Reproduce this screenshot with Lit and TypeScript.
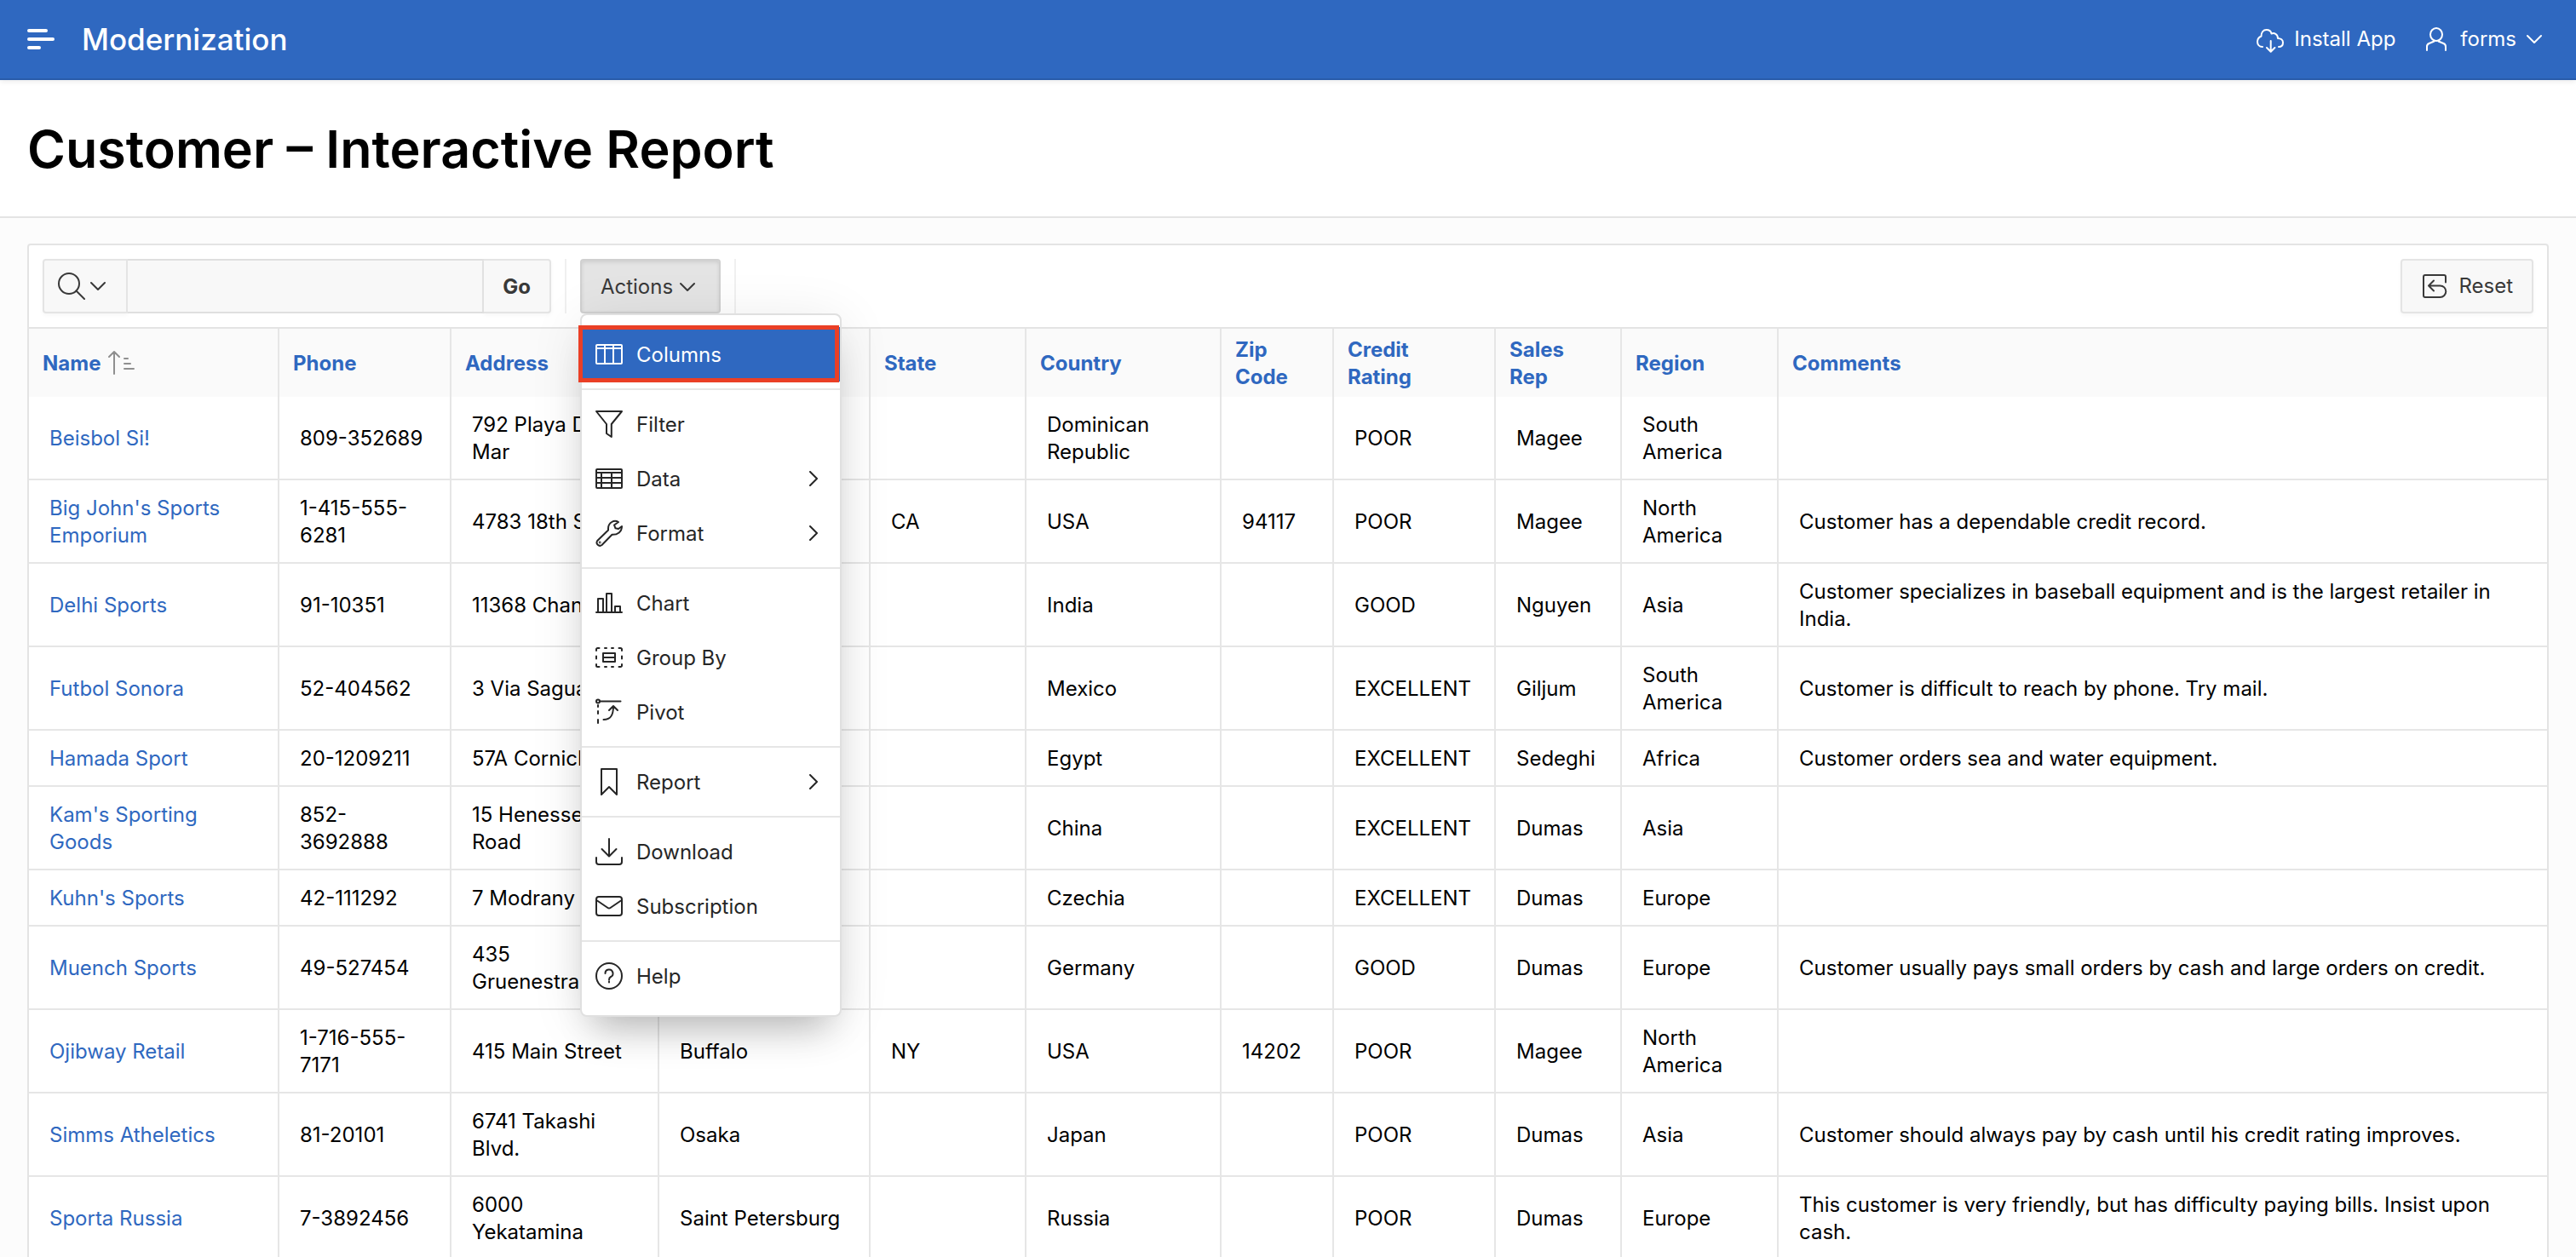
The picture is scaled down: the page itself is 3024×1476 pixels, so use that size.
import { LitElement, html, css, svg, nothing, type TemplateResult } from "lit";
import { customElement, property, state } from "lit/decorators.js";

const ICONS: Record<string, TemplateResult> = {
  install: svg`<path d="M7 25C3 25 1 22 1 19S3 13.500 5.500 12.500C5.500 8 8 5 11.500 5S17 7 17.500 9.500C21 8 25 10.500 25 15C28.500 15 31 17 31 20S29 25 26 25M16.700 18v12.500M12 26l4.700 4.700 4.700-4.700"/>`,
  user: svg`<ellipse cx="16" cy="10.500" rx="7" ry="7.500"/><path d="M13.500 17.500v1L7.500 21a4 4 0 0 0-2.500 4v4M18.500 17.500v1l6 2.500a4 4 0 0 1 2.500 4v4"/>`,
  reset: svg`<path d="M29 11.500V5a2 2 0 0 0-2-2H5a2 2 0 0 0-2 2v22a2 2 0 0 0 2 2h17.500a6.800 6.800 0 0 0 0-13.600H9M15 9.500l-6 6 6 6"/>`,
  search: svg`<circle cx="13" cy="13" r="12"/><path d="M21.500 21.500L31 31"/>`,
  columns: svg`<rect x="1" y="5" width="30" height="22" rx="1"/><path d="M1 9h30M11 5v22M21 5v22"/>`,
  filter: svg`<path d="M1 1h30L18.800 16v15L13 27V16Z"/>`,
  data: svg`<rect x="1" y="5" width="30" height="22" rx="1"/><path d="M1 9h30M1 15h30M1 21h30M7 9v18M19 9v18"/>`,
  format: svg`<path d="M27 3C22 0 15 3.500 15 10.500V12.500L2.200 25A3.700 3.700 0 0 0 7.500 30L19.500 17.800C26 18 31 14.500 31 8L27 11 23.500 10.300 22 6.500Z"/><circle cx="5.200" cy="27" r=".4"/>`,
  chart: svg`<path d="M1 27h30M3 27V11h6v16M13 27V5h6v22M23 27v-7h6v7"/>`,
  group: svg`<rect x="9" y="11" width="14" height="10"/><path d="M9 16h14M1 8V6.500A1.500 1.500 0 0 1 2.500 5H4.500M27.500 5h2A1.500 1.500 0 0 1 31 6.500V8M31 24v1.500a1.500 1.500 0 0 1-1.500 1.500h-2M4.500 27H2.500A1.500 1.500 0 0 1 1 25.500V24M11 5h2M19 5h2M11 27h2M19 27h2M1 14.500v3M31 14.500v3"/>`,
  pivot: svg`<circle cx="3" cy="3.500" r="2"/><path d="M5 3.500h24.500M3 8v2M3 15v3M3 25v4M9.500 25c9 0 11.500-6 11.500-15.500M16 14l5-5 5 5"/>`,
  report: svg`<path d="M7 1h18v30l-9-9-9 9Z"/>`,
  download: svg`<path d="M16 1v20M7.500 13l8.500 8.500 8.500-8.500M1 23v5a3 3 0 0 0 3 3h24a3 3 0 0 0 3-3v-5"/>`,
  mail: svg`<rect x="1" y="5" width="30" height="22" rx="3"/><path d="M2 9.500l12.500 8.500a2.500 2.500 0 0 0 3 0L30 9.500"/>`,
  help: svg`<circle cx="16" cy="16" r="15"/><path d="M11.500 13a4.500 4.500 0 1 1 6.500 4c-1.500.800-2 1.500-2 3.500M16 22.500v1"/>`,
};

const CHEVRON_DOWN = html`<svg class="chevron-down" viewBox="0 0 18 12" aria-hidden="true"><path d="M1 2l8 8 8-8" /></svg>`;
const CHEVRON_RIGHT = html`<svg class="chevron-right" viewBox="0 0 12 18" aria-hidden="true"><path d="M2 1l8 8-8 8" /></svg>`;

const icon = (name: string) =>
  html`<svg class="icon" viewBox="0 0 32 32" aria-hidden="true">${ICONS[name]}</svg>`;

const iconStyles = css`
  svg {
    flex: none;
    fill: none;
    stroke: currentColor;
    stroke-width: 2;
    stroke-linecap: round;
    stroke-linejoin: round;
  }
  .icon {
    width: 32px;
    height: 32px;
  }
  .chevron-down {
    width: 18px;
    height: 12px;
  }
  .chevron-right {
    width: 12px;
    height: 18px;
  }
`;

interface MenuEntry {
  label: string;
  icon: string;
  submenu?: boolean;
  active?: boolean;
}

const MENU: MenuEntry[][] = [
  [{ label: "Columns", icon: "columns", active: true }],
  [
    { label: "Filter", icon: "filter" },
    { label: "Data", icon: "data", submenu: true },
    { label: "Format", icon: "format", submenu: true },
  ],
  [
    { label: "Chart", icon: "chart" },
    { label: "Group By", icon: "group" },
    { label: "Pivot", icon: "pivot" },
  ],
  [{ label: "Report", icon: "report", submenu: true }],
  [
    { label: "Download", icon: "download" },
    { label: "Subscription", icon: "mail" },
  ],
  [{ label: "Help", icon: "help" }],
];

const COLUMNS = [
  { label: "Name", cls: "name" },
  { label: "Phone", cls: "phone" },
  { label: "Address", cls: "address" },
  { label: "City", cls: "city" },
  { label: "State", cls: "state" },
  { label: "Country", cls: "country" },
  { label: "Zip Code", cls: "zip" },
  { label: "Credit Rating", cls: "rating" },
  { label: "Sales Rep", cls: "rep" },
  { label: "Region", cls: "region" },
  { label: "Comments", cls: "comments" },
];

const CUSTOMERS: string[][] = [
  ["Beisbol Si!", "809-352689", "792 Playa Del Mar", "San Pedro de Macoris", "", "Dominican Republic", "", "POOR", "Magee", "South America", ""],
  ["Big John's Sports Emporium", "1-415-555-6281", "4783 18th Street", "San Francisco", "CA", "USA", "94117", "POOR", "Magee", "North America", "Customer has a dependable credit record."],
  ["Delhi Sports", "91-10351", "11368 Chanakya", "New Delhi", "", "India", "", "GOOD", "Nguyen", "Asia", "Customer specializes in baseball equipment and is the largest retailer in India."],
  ["Futbol Sonora", "52-404562", "3 Via Saguaro", "Nogales", "", "Mexico", "", "EXCELLENT", "Giljum", "South America", "Customer is difficult to reach by phone. Try mail."],
  ["Hamada Sport", "20-1209211", "57A Corniche", "Alexandria", "", "Egypt", "", "EXCELLENT", "Sedeghi", "Africa", "Customer orders sea and water equipment."],
  ["Kam's Sporting Goods", "852-3692888", "15 Henessey Road", "Hong Kong", "", "China", "", "EXCELLENT", "Dumas", "Asia", ""],
  ["Kuhn's Sports", "42-111292", "7 Modrany", "Prague", "", "Czechia", "", "EXCELLENT", "Dumas", "Europe", ""],
  ["Muench Sports", "49-527454", "435 Gruenestrasse", "Stuttgart", "", "Germany", "", "GOOD", "Dumas", "Europe", "Customer usually pays small orders by cash and large orders on credit."],
  ["Ojibway Retail", "1-716-555-7171", "415 Main Street", "Buffalo", "NY", "USA", "14202", "POOR", "Magee", "North America", ""],
  ["Simms Atheletics", "81-20101", "6741 Takashi Blvd.", "Osaka", "", "Japan", "", "POOR", "Dumas", "Asia", "Customer should always pay by cash until his credit rating improves."],
  ["Sporta Russia", "7-3892456", "6000 Yekatamina", "Saint Petersburg", "", "Russia", "", "POOR", "Dumas", "Europe", "This customer is very friendly, but has difficulty paying bills. Insist upon cash."],
];

@customElement("app-header")
export class AppHeader extends LitElement {
  static styles = [
    iconStyles,
    css`
      :host {
        display: flex;
        align-items: center;
        justify-content: space-between;
        box-sizing: border-box;
        height: 94px;
        padding: 0 32px;
        color: #fff;
        background: #2f68c0;
        border-bottom: 2px solid #295caa;
        box-shadow: 0 2px 6px rgba(0, 0, 0, 0.08);
      }
      .brand,
      .nav {
        display: flex;
        align-items: center;
        gap: 32px;
      }
      button {
        display: flex;
        align-items: center;
        gap: 12px;
        padding: 0;
        border: 0;
        color: inherit;
        background: none;
        font: inherit;
      }
      .toggle {
        flex-direction: column;
        align-items: flex-start;
        gap: 6px;
        width: 32px;
      }
      .bar {
        width: 32px;
        height: 4px;
        border-radius: 2px;
        background: #fff;
      }
      .bar.top {
        width: 24px;
      }
      .bar.bottom {
        width: 16px;
      }
      .title {
        color: inherit;
        font-size: 35px;
        line-height: 48px;
        font-weight: 500;
        text-decoration: none;
      }
      .account {
        padding-right: 8px;
      }
    `,
  ];

  render() {
    return html`
      <div class="brand">
        <button class="toggle" type="button" aria-label="Main navigation">
          <span class="bar top"></span><span class="bar"></span><span class="bar bottom"></span>
        </button>
        <a class="title" href="#">Modernization</a>
      </div>
      <nav class="nav" aria-label="Account">
        <button type="button">${icon("install")}Install App</button>
        <button class="account" type="button">${icon("user")}forms ${CHEVRON_DOWN}</button>
      </nav>
    `;
  }
}

@customElement("actions-menu")
export class ActionsMenu extends LitElement {
  static styles = [
    iconStyles,
    css`
      :host {
        display: block;
        box-sizing: border-box;
        width: 307px;
        padding: 14px 0;
        color: #262626;
        background: #fff;
        border: 2px solid #e0e0e0;
        border-radius: 8px;
        box-shadow: 0 28px 40px -16px rgba(0, 0, 0, 0.24), 0 8px 64px rgba(0, 0, 0, 0.09);
      }
      .group {
        display: flex;
        flex-direction: column;
      }
      .group + .group {
        margin-top: 8px;
        padding-top: 8px;
        border-top: 2px solid #e6e6e6;
      }
      .item {
        position: relative;
        display: flex;
        align-items: center;
        gap: 16px;
        height: 64px;
        padding: 0 25px 0 16px;
        border: 0;
        color: inherit;
        background: none;
        font: inherit;
        text-align: left;
      }
      .label {
        flex: 1;
        padding-top: 2px;
      }
      .item.active {
        color: #fff;
        background: #2f68c0;
      }
      .marker {
        position: absolute;
        inset: -2px 1px -1px -4px;
        border: 5px solid #ea3f26;
      }
    `,
  ];

  render() {
    return html`${MENU.map(
      (group) => html`<div class="group" role="group">
        ${group.map(
          (entry) => html`<button class="item ${entry.active ? "active" : ""}" type="button" role="menuitem">
            ${icon(entry.icon)}<span class="label">${entry.label}</span>
            ${entry.submenu ? CHEVRON_RIGHT : nothing}
            ${entry.active ? html`<span class="marker"></span>` : nothing}
          </button>`
        )}
      </div>`
    )}`;
  }
}

@customElement("report-toolbar")
export class ReportToolbar extends LitElement {
  @property({ type: Boolean }) open = true;

  static styles = [
    iconStyles,
    css`
      :host {
        display: flex;
        align-items: center;
        justify-content: space-between;
        padding: 16px;
        border-bottom: 2px solid #e4e4e4;
      }
      .groups {
        display: flex;
        gap: 16px;
      }
      .group {
        position: relative;
        display: flex;
        padding-right: 16px;
        border-right: 2px solid #f0f0f0;
      }
      button,
      input {
        box-sizing: border-box;
        height: 64px;
        margin: 0;
        border: 2px solid #e4e4e4;
        color: #393939;
        background: #f8f8f8;
        font: inherit;
      }
      button {
        display: flex;
        align-items: center;
        justify-content: center;
        padding-top: 2px;
        box-shadow: 0 2px 4px rgba(0, 0, 0, 0.04);
      }
      .search {
        justify-content: flex-start;
        width: 100px;
        gap: 6px;
        padding: 0 0 0 16px;
        border-radius: 4px 0 0 4px;
      }
      .text {
        width: 418px;
        padding: 0 16px;
        border-color: #dfdfdf #e4e4e4;
        border-left: 0;
        outline: 0;
      }
      .go {
        width: 79px;
        padding: 2px 0 0;
        border-left: 0;
        border-radius: 0 4px 4px 0;
        font-weight: 700;
      }
      .actions {
        width: 165px;
        gap: 8px;
        padding: 2px 6px 0 0;
        border-color: #d0d0d0;
        border-radius: 4px;
        background: #e4e4e4;
        box-shadow: inset 0 2px 4px rgba(0, 0, 0, 0.1);
      }
      .reset {
        gap: 12px;
        padding: 0 22px;
        border-radius: 4px;
      }
      actions-menu {
        position: absolute;
        top: 100%;
        left: 0;
        z-index: 1;
      }
    `,
  ];

  private toggle() {
    this.open = !this.open;
  }

  render() {
    return html`
      <div class="groups">
        <div class="group" role="search">
          <button class="search" type="button" aria-label="Select columns to search">${icon("search")}${CHEVRON_DOWN}</button>
          <input class="text" type="text" aria-label="Search report" />
          <button class="go" type="button">Go</button>
        </div>
        <div class="group">
          <button class="actions" type="button" aria-haspopup="menu" aria-expanded=${this.open} @click=${this.toggle}>
            Actions ${CHEVRON_DOWN}
          </button>
          ${this.open ? html`<actions-menu role="menu" aria-label="Actions"></actions-menu>` : nothing}
        </div>
      </div>
      <button class="reset" type="button">${icon("reset")}Reset</button>
    `;
  }
}

@customElement("report-table")
export class ReportTable extends LitElement {
  @state() private rows = CUSTOMERS;

  static styles = css`
    :host {
      display: block;
    }
    table {
      width: 100%;
      table-layout: fixed;
      border-spacing: 0;
      color: #000;
    }
    th,
    td {
      text-align: left;
      vertical-align: middle;
    }
    th + th,
    td + td {
      border-left: 2px solid #e6e6e6;
    }
    th {
      padding: 9px 24px 7px 16px;
      background: #fafafa;
    }
    td {
      padding: 17px 24px 15px;
      border-bottom: 2px solid #e6e6e6;
    }
    a {
      color: #2f68c0;
      text-decoration: none;
    }
    th a {
      font-weight: 700;
    }
    .sort {
      width: 32px;
      height: 32px;
      margin-left: 8px;
      vertical-align: top;
      fill: none;
      stroke: #8f8f8f;
      stroke-width: 2;
      stroke-linecap: round;
      stroke-linejoin: round;
    }
    .name { width: 292px; }
    .phone { width: 202px; }
    .address { width: 244px; }
    .city { width: 248px; }
    .state { width: 183px; }
    .country { width: 229px; }
    .zip { width: 132px; }
    .rating { width: 190px; }
    .rep { width: 148px; }
    .region { width: 184px; }
    .comments { width: auto; }
  `;

  render() {
    return html`<table>
      <colgroup>
        ${COLUMNS.map((c) => html`<col class=${c.cls} />`)}
      </colgroup>
      <thead>
        <tr>
          ${COLUMNS.map(
            (c, i) => html`<th scope="col" aria-sort=${i === 0 ? "ascending" : "none"}><a href="#">${c.label}</a>${i === 0
              ? html`<svg class="sort" viewBox="0 0 32 32" aria-hidden="true"><path d="M8 28V2M2 8l6-6 6 6M20 10h4M20 16h7M20 22h11" /></svg>`
              : nothing}</th>`
          )}
        </tr>
      </thead>
      <tbody>
        ${this.rows.map(
          (row) => html`<tr>
            ${row.map((cell, i) => html`<td>${i === 0 ? html`<a href="#">${cell}</a>` : cell}</td>`)}
          </tr>`
        )}
      </tbody>
    </table>`;
  }
}

@customElement("app-root")
export class AppRoot extends LitElement {
  static styles = css`
    :host {
      display: block;
      height: 100vh;
      overflow: hidden;
      background: #fcfcfc;
      font-family: Inter, "Liberation Sans", sans-serif;
      font-size: 24px;
      line-height: 32px;
    }
    app-header {
      position: relative;
    }
    .title-bar {
      padding: 41px 32px 39px;
      background: #fff;
      border-bottom: 2px solid #e4e4e4;
    }
    h1 {
      margin: 0;
      font-size: 61px;
      line-height: 80px;
      font-weight: 600;
    }
    main {
      padding: 30px 32px;
    }
    .region {
      background: #fff;
      border: 2px solid #e4e4e4;
      border-radius: 4px;
    }
  `;

  render() {
    return html`
      <app-header></app-header>
      <div class="title-bar"><h1>Customer – Interactive Report</h1></div>
      <main>
        <section class="region" aria-label="Customers">
          <report-toolbar></report-toolbar>
          <report-table></report-table>
        </section>
      </main>
    `;
  }
}
